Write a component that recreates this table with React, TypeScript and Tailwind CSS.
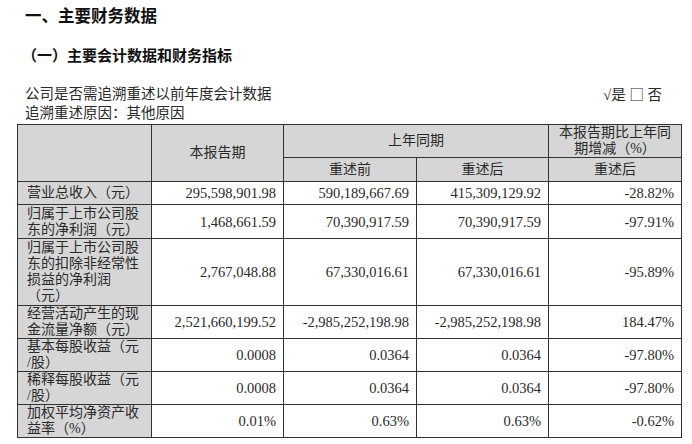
import React from "react";

const cjk = { fontFamily: '"Liberation Serif", "Noto Sans CJK SC", serif' };
const hei = { fontFamily: '"Noto Sans CJK SC", sans-serif' };

type Row = { label: string[]; h: string; cur: string; before: string; after: string; chg: string };

const rows: Row[] = [
  { label: ["营业总收入（元）"], h: "h-[23px]", cur: "295,598,901.98", before: "590,189,667.69", after: "415,309,129.92", chg: "-28.82%" },
  { label: ["归属于上市公司股", "东的净利润（元）"], h: "h-[34px]", cur: "1,468,661.59", before: "70,390,917.59", after: "70,390,917.59", chg: "-97.91%" },
  {
    label: ["归属于上市公司股", "东的扣除非经常性", "损益的净利润", "（元）"],
    h: "h-[67px]",
    cur: "2,767,048.88",
    before: "67,330,016.61",
    after: "67,330,016.61",
    chg: "-95.89%",
  },
  { label: ["经营活动产生的现", "金流量净额（元）"], h: "h-[33px]", cur: "2,521,660,199.52", before: "-2,985,252,198.98", after: "-2,985,252,198.98", chg: "184.47%" },
  { label: ["基本每股收益（元", "/股）"], h: "h-[33px]", cur: "0.0008", before: "0.0364", after: "0.0364", chg: "-97.80%" },
  { label: ["稀释每股收益（元", "/股）"], h: "h-[33px]", cur: "0.0008", before: "0.0364", after: "0.0364", chg: "-97.80%" },
  { label: ["加权平均净资产收", "益率（%）"], h: "h-[33px]", cur: "0.01%", before: "0.63%", after: "0.63%", chg: "-0.62%" },
];

const cell = "border border-[#333] p-0";
const num = `${cell} text-right pr-[7px] whitespace-nowrap text-[14.5px] bg-white`;

export default function App() {
  return (
    <div className="w-[692px] h-[444px] bg-white text-[#2a2a2a] overflow-hidden" style={cjk}>
      <div className="pl-[25px] h-[30px] leading-[30px] text-[16.5px] font-bold text-[#111]" style={hei}>
        一、主要财务数据
      </div>
      <div className="pl-[22px] mt-[10px] h-[30px] leading-[30px] text-[15px] font-bold text-[#111]" style={hei}>
        （一）主要会计数据和财务指标
      </div>
      <div className="mt-[15px] pl-[25px] text-[14.5px] leading-[18px]">
        <div className="flex justify-between pr-[30px]">
          <span>公司是否需追溯重述以前年度会计数据</span>
          <span>
            √是 <span style={hei}>□</span> 否
          </span>
        </div>
        <div>追溯重述原因：其他原因</div>
      </div>
      <table className="ml-[17px] mt-[2px] border-collapse table-fixed w-[664px] leading-[16px] text-[14px]">
        <colgroup>
          <col className="w-[134px]" />
          <col className="w-[132px]" />
          <col className="w-[133px]" />
          <col className="w-[132px]" />
          <col className="w-[133px]" />
        </colgroup>
        <tbody>
          <tr className="h-[33px] bg-[#d6d6d6]">
            <td rowSpan={2} className={cell}></td>
            <td rowSpan={2} className={`${cell} text-center`}>本报告期</td>
            <td colSpan={2} className={`${cell} text-center`}>上年同期</td>
            <td className={`${cell} text-center`}>
              本报告期比上年同
              <br />
              期增减（%）
            </td>
          </tr>
          <tr className="h-[24px] bg-[#d6d6d6]">
            <td className={`${cell} text-center`}>重述前</td>
            <td className={`${cell} text-center`}>重述后</td>
            <td className={`${cell} text-center`}>重述后</td>
          </tr>
          {rows.map((r) => (
            <tr key={r.label.join("")} className={r.h}>
              <td className={`${cell} bg-[#d6d6d6] pl-[9px] whitespace-nowrap text-left`}>
                {r.label.map((l, i) => (
                  <React.Fragment key={i}>
                    {i > 0 && <br />}
                    {l}
                  </React.Fragment>
                ))}
              </td>
              <td className={num}>{r.cur}</td>
              <td className={num}>{r.before}</td>
              <td className={num}>{r.after}</td>
              <td className={num}>{r.chg}</td>
            </tr>
          ))}
        </tbody>
      </table>
    </div>
  );
}
